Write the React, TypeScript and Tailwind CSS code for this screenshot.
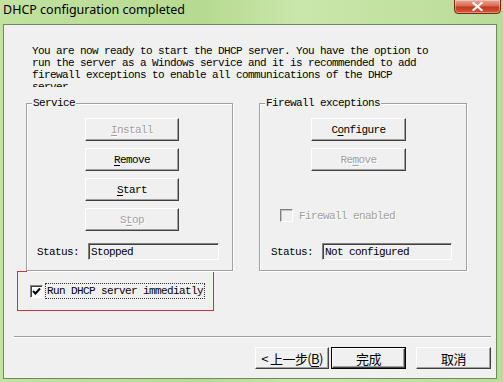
import React from 'react';

const mono = "font-['Liberation_Mono','DejaVu_Sans_Mono',monospace] text-[11px] tracking-[-0.6px] leading-[12px] text-black";
const cjk = "font-['Noto_Sans_CJK_SC','Noto_Sans',sans-serif] text-[13px] leading-none text-black";

const Btn = ({ children, disabled, className = '' }: { children: React.ReactNode; disabled?: boolean; className?: string }) => (
  <div
    className={`flex items-center justify-center bg-[#f0f0f0] border border-t-white border-l-white border-b-[#404040] border-r-[#404040] shadow-[inset_-1px_-1px_0_#a0a0a0] ${className} ${
      disabled ? 'text-[#a0a0a0] [text-shadow:1px_1px_0_#fff]' : 'text-black'
    }`}
  >
    {children}
  </div>
);

const U = ({ children }: { children: React.ReactNode }) => (
  <span className="underline underline-offset-[2px]">{children}</span>
);

const Field = ({ value }: { value: string }) => (
  <div className="h-[17px] flex items-center pl-[2px] bg-[#f0f0f0] border border-t-[#808080] border-l-[#808080] border-b-white border-r-white shadow-[inset_1px_1px_0_#404040]">
    {value}
  </div>
);

const GroupBox = ({ title, className = '', children }: { title: string; className?: string; children: React.ReactNode }) => (
  <div className={`relative h-[168px] border border-[#a0a0a0] shadow-[inset_1px_1px_0_#fff,1px_1px_0_#fff] ${className}`}>
    <span className="absolute -top-[7px] left-[5px] px-[1px] bg-[#f0f0f0]">{title}</span>
    {children}
  </div>
);

export default function App() {
  return (
    <div className="w-[503px] h-[382px] overflow-hidden flex flex-col bg-[linear-gradient(90deg,#c2e2a0_0%,#b6da92_40%,#c9e7aa_60%,#b9dc97_100%)]">
      {/* title bar */}
      <div className="h-[24px] flex items-start justify-between shrink-0">
        <div className="pl-[3px] pt-[2px] font-['Noto_Sans',sans-serif] text-[12.5px] leading-[16px] text-black">
          DHCP configuration completed
        </div>
        <div className="mr-[2px] w-[47px] h-[15px] -mt-[1px] rounded-b-[4px] border border-[#7a2418] bg-[linear-gradient(180deg,#eaa99a_0%,#d9694f_45%,#c2391f_55%,#d45a3a_100%)] flex items-center justify-center shadow-[inset_0_0_0_1px_rgba(255,255,255,0.35)]">
          <svg width="11" height="9" viewBox="0 0 11 9">
            <path d="M1.5 1 L9.5 8 M9.5 1 L1.5 8" stroke="#fff" strokeWidth="2.2" strokeLinecap="square" />
          </svg>
        </div>
      </div>

      {/* client */}
      <div className={`ml-[3px] w-[494px] h-[355px] border border-[#6f8a5c] bg-[#f0f0f0] flex flex-col ${mono}`}>
        <div className="mt-[20px] ml-[28px] w-[420px] h-[42px] overflow-hidden">
          You are now ready to start the DHCP server. You have the option to
          <br />
          run the server as a Windows service and it is recommended to add
          <br />
          firewall exceptions to enable all communications of the DHCP
          <br />
          server.
        </div>

        <div className="mt-[16px] ml-[22px] flex gap-[26px]">
          <GroupBox title="Service" className="w-[207px]">
            <div className="flex flex-col gap-[7px] pt-[14px] pl-[58px]">
              <Btn disabled className="w-[94px] h-[23px]"><U>I</U>nstall</Btn>
              <Btn className="w-[94px] h-[23px]"><U>R</U>emove</Btn>
              <Btn className="w-[94px] h-[23px]"><U>S</U>tart</Btn>
              <Btn disabled className="w-[94px] h-[23px]">S<U>t</U>op</Btn>
            </div>
            <div className="mt-[12px] flex items-center">
              <span className="ml-[10px] w-[51px]">Status:</span>
              <div className="w-[131px]">
                <Field value="Stopped" />
              </div>
            </div>
          </GroupBox>

          <GroupBox title="Firewall exceptions" className="w-[208px]">
            <div className="flex flex-col gap-[7px] pt-[14px] pl-[51px]">
              <Btn className="w-[95px] h-[23px]">C<U>o</U>nfigure</Btn>
              <Btn disabled className="w-[95px] h-[23px]">Re<U>m</U>ove</Btn>
            </div>
            <div className="mt-[38px] ml-[20px] flex items-center gap-[6px] text-[#a0a0a0] [text-shadow:1px_1px_0_#fff]">
              <div className="w-[13px] h-[13px] bg-[#f0f0f0] border border-t-[#808080] border-l-[#808080] border-b-white border-r-white shadow-[inset_1px_1px_0_#c0c0c0]" />
              <span>Firewall enabled</span>
            </div>
            <div className="mt-[21px] flex items-center">
              <span className="ml-[11px] w-[51px]">Status:</span>
              <div className="w-[130px]">
                <Field value="Not configured" />
              </div>
            </div>
          </GroupBox>
        </div>

        <div className="ml-[13px] w-[197px] h-[40px] border-[1.5px] border-[#cc3340] flex items-center">
          <div className="ml-[12px] w-[13px] h-[13px] bg-white border border-t-[#808080] border-l-[#808080] border-b-white border-r-white shadow-[inset_1px_1px_0_#404040] flex items-center justify-center">
            <svg width="9" height="9" viewBox="0 0 9 9">
              <path d="M1 4 L3.5 6.5 L8 1.5" fill="none" stroke="#000" strokeWidth="2" />
            </svg>
          </div>
          <span className="ml-[3px] px-[1px] py-[1px] outline outline-1 outline-dotted outline-[#333]">
            Run DHCP server immediatly
          </span>
        </div>

        <div className="mt-[25px] ml-[10px] w-[477px] h-[2px] border-t border-t-[#a0a0a0] border-b border-b-white" />

        <div className={`mt-[9px] ml-[251px] flex ${cjk}`}>
          <Btn className="w-[74px] h-[22px]">
            &lt; 上一步(<U>B</U>)
          </Btn>
          <div className="ml-[2px] w-[75px] h-[22px] border border-black flex">
            <Btn className="w-full h-full">完成</Btn>
          </div>
          <Btn className="ml-[10px] w-[75px] h-[22px]">取消</Btn>
        </div>
      </div>
    </div>
  );
}
